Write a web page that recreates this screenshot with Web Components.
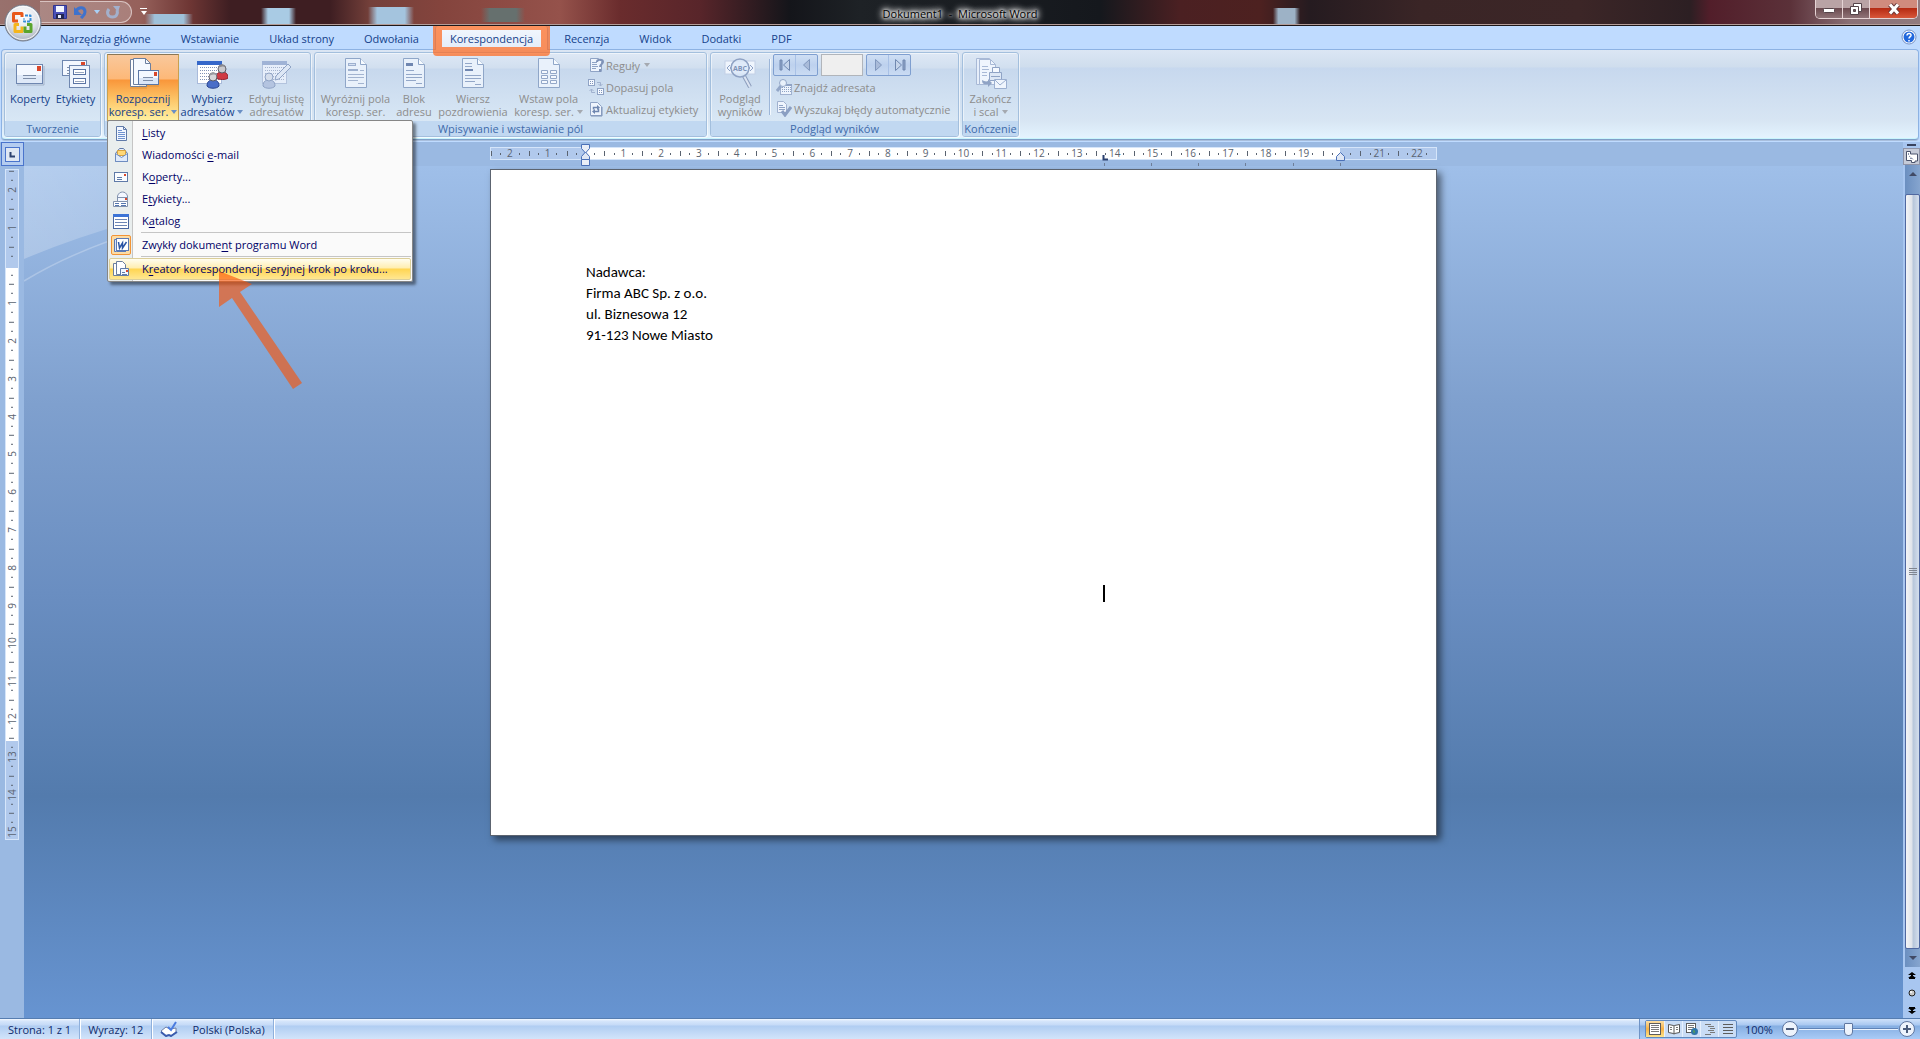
<!DOCTYPE html>
<html lang="pl">
<head>
<meta charset="utf-8">
<title>Dokument1 - Microsoft Word</title>
<style>
    html, body {
        margin: 0;
        height: 100%;
        overflow: hidden;
    }

    body {
        font-family: "Segoe UI", "Open Sans", "Noto Sans", sans-serif;
        font-size: 11px;
        line-height: 13px;
        color: #15428b;
    }
</style>
</head>
<body>

<word-app>
    <title-bar slot="title" heading="Dokument1  -  Microsoft Word"></title-bar>

    <ribbon-tabs slot="tabs">
        <ribbon-tab>Narzędzia główne</ribbon-tab>
        <ribbon-tab>Wstawianie</ribbon-tab>
        <ribbon-tab>Układ strony</ribbon-tab>
        <ribbon-tab>Odwołania</ribbon-tab>
        <ribbon-tab selected>Korespondencja</ribbon-tab>
        <ribbon-tab>Recenzja</ribbon-tab>
        <ribbon-tab>Widok</ribbon-tab>
        <ribbon-tab>Dodatki</ribbon-tab>
        <ribbon-tab>PDF</ribbon-tab>
    </ribbon-tabs>

    <ribbon-panel slot="ribbon">
        <ribbon-group label="Tworzenie">
            <big-button icon="envelope" line1="Koperty" style="--w: 46px"></big-button>
            <big-button icon="labels" line1="Etykiety" style="--w: 45px"></big-button>
        </ribbon-group>
        <ribbon-group>
            <big-button icon="merge" line1="Rozpocznij" line2="koresp. ser." arrow active style="--w: 72px">
                <drop-menu slot="menu">
                    <menu-item icon="m-letter"><u>L</u>isty</menu-item>
                    <menu-item icon="m-mail">Wiadomości <u>e</u>-mail</menu-item>
                    <menu-item icon="m-envelope">K<u>o</u>perty...</menu-item>
                    <menu-item icon="m-labels">E<u>t</u>ykiety...</menu-item>
                    <menu-item icon="m-catalog">K<u>a</u>talog</menu-item>
                    <menu-line></menu-line>
                    <menu-item icon="m-word" checked>Zwykły dokume<u>n</u>t programu Word</menu-item>
                    <menu-line></menu-line>
                    <menu-item icon="m-wizard" hot>K<u>r</u>eator korespondencji seryjnej krok po kroku...</menu-item>
                </drop-menu>
            </big-button>
            <big-button icon="people" line1="Wybierz" line2="adresatów" arrow style="--w: 66px"></big-button>
            <big-button icon="editlist" line1="Edytuj listę" line2="adresatów" disabled style="--w: 63px"></big-button>
        </ribbon-group>
        <ribbon-group label="Wpisywanie i wstawianie pól">
            <big-button icon="doc-mark" line1="Wyróżnij pola" line2="koresp. ser." disabled style="--w: 77px"></big-button>
            <big-button icon="doc-addr" line1="Blok" line2="adresu" disabled style="--w: 40px"></big-button>
            <big-button icon="doc-greet" line1="Wiersz" line2="pozdrowienia" disabled style="--w: 78px"></big-button>
            <big-button icon="doc-field" line1="Wstaw pola" line2="koresp. ser." arrow disabled style="--w: 73px"></big-button>
            <button-stack style="--w: 119px">
                <small-button icon="rules" arrow>Reguły</small-button>
                <small-button icon="match">Dopasuj pola</small-button>
                <small-button icon="refresh">Aktualizuj etykiety</small-button>
            </button-stack>
        </ribbon-group>
        <ribbon-group label="Podgląd wyników">
            <big-button icon="preview" line1="Podgląd" line2="wyników" disabled style="--w: 54px"></big-button>
            <group-divider></group-divider>
            <button-stack style="--w: 183px">
                <record-nav></record-nav>
                <small-button icon="find">Znajdź adresata</small-button>
                <small-button icon="check">Wyszukaj błędy automatycznie</small-button>
            </button-stack>
        </ribbon-group>
        <ribbon-group label="Kończenie">
            <big-button icon="finish" line1="Zakończ" line2="i scal" arrow disabled style="--w: 51px"></big-button>
        </ribbon-group>
    </ribbon-panel>

    <word-workspace slot="work">
        <doc-page>
            <p>Nadawca:</p>
            <p>Firma ABC Sp. z o.o.</p>
            <p>ul. Biznesowa 12</p>
            <p>91-123 Nowe Miasto</p>
        </doc-page>
    </word-workspace>

    <status-bar slot="status"></status-bar>
</word-app>

<script>
// Shared drawings, keyed by icon name: [width, height, markup]
const page = (inner) => `
    <path d="M5.5 1.500h15l6 6v23h-21z" fill="#e9f1fb" stroke="#8fa6c8"/>
    <path d="M20.500 1.500v6h6" fill="#f7fbff" stroke="#8fa6c8"/>${inner}`;

const ICONS = {
    envelope: [32, 32, `
        <path d="M3 28h27V9" fill="none" stroke="#8e9bb0" opacity=".6"/>
        <rect x="2.500" y="7.500" width="26" height="19" fill="#f4f8ff" stroke="#6f87b0"/>
        <rect x="3" y="18" width="25" height="8" fill="#dfe9f8"/>
        <rect x="23" y="9" width="4" height="5" fill="#d9472b"/>
        <path d="M9 18.500h13M9 21.500h13" stroke="#7f8ea8"/>`],
    labels: [32, 32, `
        <rect x="2.500" y="3.500" width="24" height="15" fill="#f4f8ff" stroke="#6f87b0"/>
        <rect x="21" y="5" width="4" height="4" fill="#d9472b"/>
        <path d="M7 10.500h5M7 13.500h5M7 16.500h5" stroke="#7f8ea8"/>
        <rect x="9.500" y="8.500" width="20" height="22" fill="#eef4fd" stroke="#6f87b0"/>
        <rect x="13.500" y="12.500" width="12" height="5" fill="#fff" stroke="#5a74a4"/>
        <rect x="13.500" y="21.500" width="12" height="5" fill="#fff" stroke="#5a74a4"/>
        <path d="M15 15.500h9M15 24.500h9" stroke="#9aa8c0"/>`],
    merge: [32, 32, `
        <path d="M3.500 2.500h12l4 4v23h-16z" fill="#fff" stroke="#6c7f9f"/>
        <path d="M6.500 1.500h12l5 5v21h-17z" fill="#f5f9ff" stroke="#6c7f9f"/>
        <path d="M18.500 1.500v5h5" fill="none" stroke="#6c7f9f"/>
        <rect x="11.500" y="13.500" width="20" height="14" fill="#f4f8ff" stroke="#5c77a5"/>
        <rect x="12" y="21" width="19" height="6" fill="#dbe6f7"/>
        <rect x="27" y="15" width="3" height="4" fill="#d9472b"/>
        <path d="M16 20.500h10M16 23.500h10" stroke="#7f8ea8"/>
        <path d="M3 31h17M12 29h20" stroke="#a07030" opacity=".35"/>`],
    people: [32, 32, `
        <rect x="1.500" y="4.500" width="24" height="22" fill="#fff" stroke="#a9bada"/>
        <rect x="1" y="4" width="25" height="4" fill="#3567c9"/>
        <path d="M4 10.500h20M4 13.500h20M4 16.500h20M4 19.500h20M4 22.500h20" stroke="#8193b5" stroke-dasharray="1 1"/>
        <path d="M20 21c0-5 3-6 6-6s6 1 6 6c-2 2-9 2-12 0z" fill="#cf3a44" stroke="#912530"/>
        <circle cx="26" cy="12" r="4" fill="#c9c9cd" stroke="#5a5a66"/><path d="M22 11c0-5 8-5 8 0-2-2-5-2-8 0z" fill="#8a8a90"/>
        <path d="M11 29c0-5 3-6 6-6s6 1 6 6c-2 3-10 3-12 0z" fill="#4a6ec8" stroke="#2b4690"/>
        <circle cx="17" cy="20" r="4" fill="#d6d6da" stroke="#5a5a66"/><path d="M13 19c0-5 8-5 8 0-2-2-5-2-8 0z" fill="#9a9aa0"/>`],
    editlist: [32, 32, `
        <rect x="1.500" y="4.500" width="24" height="22" fill="#e6eefa" stroke="#b3c3dd"/>
        <rect x="1" y="4" width="25" height="4" fill="#9fb3d6"/>
        <path d="M4 10.500h20M4 13.500h20M4 16.500h20M4 19.500h20M4 22.500h20" stroke="#a5b4ce" stroke-dasharray="1 1"/>
        <path d="M15 19l12-12 3 3-12 12-4 1z" fill="#dde7f5" stroke="#8fa3c5"/>
        <path d="M2 29c0-5 3-6 6-6s6 1 6 6c-2 3-10 3-12 0z" fill="#b4c4e0" stroke="#8fa3c5"/>
        <circle cx="8" cy="20" r="4" fill="#d5deec" stroke="#8fa3c5"/>`],
    "doc-mark": [32, 32, page(`
        <rect x="8.500" y="6.500" width="7" height="2" fill="#d6e1f2" stroke="#9db0cf"/>
        <path d="M8 13h10" stroke="#9db0cf" stroke-width="2"/>
        <path d="M20 13.500h4M8 17.500h16M8 20.500h16M8 23.500h10M18 26.500h6" stroke="#a3b4d0"/>`)],
    "doc-addr": [32, 32, page(`
        <rect x="8" y="6" width="7" height="3" fill="#6f86b0"/>
        <path d="M8 13.500h8M8 17.500h16M8 20.500h16M8 23.500h10M18 26.500h6" stroke="#93a7c8"/>`)],
    "doc-greet": [32, 32, page(`
        <path d="M8 13h8" stroke="#6f86b0" stroke-width="2"/>
        <path d="M8 6.500h7M8 9.500h7M8 18.500h16M8 21.500h16M8 24.500h10M18 27.500h6" stroke="#93a7c8"/>`)],
    "doc-field": [32, 32, page(`
        <path d="M8.500 13.500h6v3h-6zM17.500 13.500h6v3h-6zM8.500 18.500h6v3h-6zM17.500 18.500h6v3h-6zM8.500 23.500h6v3h-6zM17.500 23.500h6v3h-6z" fill="#f5f9ff" stroke="#93a7c8"/>`)],
    preview: [32, 32, `
        <rect x="1" y="4" width="30" height="13" fill="#eff5fd" stroke="#c3d0e6"/>
        <path d="M6 8l-3 3 3 3M9 8l-3 3 3 3M26 8l3 3-3 3M23 8l3 3-3 3" fill="none" stroke="#8ea2c6"/>
        <path d="M20 19l6 11" stroke="#8b9cbc" stroke-width="4"/><path d="M20 19l6 11" stroke="#dbe4f2" stroke-width="2"/>
        <circle cx="16" cy="11" r="9" fill="#dbe7f7" fill-opacity=".8" stroke="#8fa2c4" stroke-width="1.500"/>
        <text x="16" y="14" text-anchor="middle" font-size="7" font-weight="700" fill="#7f93b8">ABC</text>`],
    finish: [32, 32, `
        <path d="M1.500 1.500h13v26h-13z" fill="#e6eefa" stroke="#a8b9d6"/>
        <path d="M4.500 2.500h11l5 5v20h-16z" fill="#eff5fd" stroke="#a8b9d6"/>
        <path d="M15.500 2.500v5h5M7 9.500h6M7 12.500h7M7 15.500h5M7 18.500h5" fill="none" stroke="#a8b9d6"/>
        <path d="M14.500 15.500h12v8h-12z" fill="#dde7f5" stroke="#8fa3c5"/><path d="M17.500 10.500h7v5h-7z" fill="#f5f9ff" stroke="#8fa3c5"/><path d="M16 19.500h9" stroke="#8fa3c5"/>
        <path d="M19.500 22.500h12v9h-12z" fill="#eff5fd" stroke="#9bafd0"/><path d="M20 23l5 5 6-5" fill="none" stroke="#9bafd0"/>
        <path d="M7 23c0 4 2 5 6 4v3l4-4-4-4v2c-2 1-4 0-6-1z" fill="#8fa3c5"/>`],

    rules: [16, 16, `
        <path d="M2.500 1.500h8l3 3v10h-11z" fill="#eef4fd" stroke="#8fa3c5"/><path d="M4 5.500h5M4 7.500h5M4 9.500h6M4 11.500h4" stroke="#8fa3c5"/>
        <path d="M9 5c0-3 6-3 6 0 0 2-3 2-3 5M12 12v3" fill="none" stroke="#7f93b8" stroke-width="2"/>`],
    match: [16, 16, `
        <rect x=".5" y=".5" width="6" height="6" fill="#f5f9ff" stroke="#8fa3c5"/><rect x="9.500" y="9.500" width="6" height="6" fill="#f5f9ff" stroke="#8fa3c5"/>
        <path d="M2 2.500h3M2 4.500h3M11 11.500h3M11 13.500h3" stroke="#7f93b8" stroke-dasharray="1 1"/>
        <path d="M9 3.500h3.500V7M10.500 5l2 2 2-2M7 13.500H3.500V10M1.500 12l2-2 2 2" fill="none" stroke="#a0b1cf"/>`],
    refresh: [16, 16, `
        <path d="M2.500 1.500h7l4 4v9h-11z" fill="#eef4fd" stroke="#8fa3c5"/><path d="M14 6v9H3" fill="none" stroke="#7f93b8"/>
        <path d="M5.500 8.500V6.500h4M10.500 7.500v3h-4" fill="none" stroke="#6f86b0" stroke-width="1.500"/><path d="M9 4l3 2.500-3 2.500zM7 8l-3 2.500 3 2.500z" fill="#6f86b0"/>`],
    find: [16, 16, `
        <rect x="4.500" y="5.500" width="11" height="10" fill="#eef4fd" stroke="#a0b1cf"/>
        <path d="M6 8.500h9M6 10.500h9M6 12.500h9" stroke="#8fa3c5" stroke-dasharray="1 1"/><path d="M9 6h7" stroke="#8fa3c5" stroke-width="2"/>
        <path d="M5 7l-4 5" stroke="#93a7c8" stroke-width="3"/><circle cx="7" cy="4" r="3.500" fill="#e9f1fb" stroke="#93a7c8"/>`],
    check: [16, 16, `
        <path d="M1.500.5h6l3 3v8h-9z" fill="#eef4fd" stroke="#a0b1cf"/><path d="M3 4.500h4M3 6.500h6M3 8.500h6" stroke="#8fa3c5"/>
        <path d="M6 10l3 4 6-8" fill="none" stroke="#8b9fc2" stroke-width="3"/>`],

    "m-letter": [16, 16, `
        <path d="M3.500 1.500h7l3 3v11h-10z" fill="#f2f7ff" stroke="#5f7aa8"/><path d="M10.500 1.500v3h3" fill="none" stroke="#5f7aa8"/>
        <path d="M5 5.500h4M5 7.500h7M5 9.500h7M5 11.500h7M5 13.500h7" stroke="#6f93cf"/>`],
    "m-mail": [16, 16, `
        <path d="M2.500 6.500l4-5h4l4 5v8h-12z" fill="#e8f0fc" stroke="#5f7aa8"/><path d="M4.500 3.500h8v5h-8z" fill="#ffd878" stroke="#d9a441"/>
        <path d="M2.500 6.500l6 4 6-4v8h-12z" fill="#dfeafb" stroke="#6d8cc0"/>`],
    "m-envelope": [16, 16, `
        <rect x="1.500" y="3.500" width="13" height="9" fill="#fbfdff" stroke="#5f7aa8"/><rect x="11" y="5" width="2" height="2" fill="#d9472b"/>
        <path d="M4 8.500h5M4 10.500h5" stroke="#5f7aa8"/>`],
    "m-labels": [16, 16, `
        <path d="M4.500 5c1-3 3-4 5-4s4 1 5 4v8h-10z" fill="#f2f7ff" stroke="#8393ae"/><path d="M5 6.500h9" stroke="#8393ae"/><rect x="12" y="7" width="2" height="2" fill="#d9472b"/>
        <path d="M.5 10.500h14v5H.5z" fill="#fff" stroke="#8393ae"/><path d="M2 12.500h4M2 14.500h4M8 12.500h5M8 14.500h5" stroke="#5577b0"/>`],
    "m-catalog": [16, 16, `
        <rect x=".5" y="1.500" width="15" height="14" fill="#fff" stroke="#4a67a0"/><rect y="1" width="16" height="3" fill="#3d74d6"/>
        <path d="M2 6.500h12M2 9.500h12M2 12.500h12" stroke="#6d86b5"/>`],
    "m-word": [16, 16, `
        <rect x="3.500" y="1.500" width="12" height="12" fill="#fff" stroke="#5b7ab4"/><path d="M1.500 2.500h2v12h-2zM4 14.500h9" fill="#dbe6f8" stroke="#5b7ab4"/>
        <path d="M5.500 5l1 6 3-5v5l4-6" fill="none" stroke="#2b55a5" stroke-width="1.500"/>`],
    "m-wizard": [16, 16, `
        <path d="M.5 2.500h8v12h-8z" fill="#fff" stroke="#6c7f9f"/><path d="M3.500.5h6l3 3v10h-9z" fill="#fff" stroke="#6c7f9f"/>
        <path d="M7.500 7.500h8v7h-8z" fill="#f2f7ff" stroke="#5f7aa8"/><rect x="13" y="9" width="2" height="2" fill="#d9472b"/><path d="M9 11.500h3M9 13.500h5" stroke="#5f7aa8"/>`],

    save: [16, 16, `
        <path d="M1.500 1.500h13v13h-13z" fill="#4a50b8" stroke="#2f3590"/><rect x="4" y="2" width="8" height="6" fill="#f2f6ff"/>
        <rect x="4" y="10" width="8" height="5" fill="#23264f"/><rect x="6" y="11" width="3" height="3" fill="#e8ecff"/>`],
    undo: [16, 16, `<path d="M3 7c3-5 9-4 9 1 0 3-2 4-4 6" fill="none" stroke="#3f72cc" stroke-width="3"/><path d="M1 3v8h8z" fill="#3f72cc"/>`],
    redo: [16, 16, `<path d="M4 5c-3 4-1 8 3.500 8S13 9 12 6" fill="none" stroke="#a3b0cc" stroke-width="3"/><path d="M8 2h7l-2 6z" fill="#a3b0cc"/>`],
    logo: [38, 38, `
        <defs><radialGradient id="g" cx=".5" cy=".3" r=".7"><stop offset="0" stop-color="#fff"/><stop offset=".6" stop-color="#dfe3ea"/><stop offset="1" stop-color="#a9b0bd"/></radialGradient></defs>
        <circle cx="19" cy="19" r="18" fill="url(#g)" stroke="#737a88"/><circle cx="19" cy="19" r="16.500" fill="none" stroke="#fff" opacity=".8"/>
        <g fill="none" stroke-linejoin="round">
            <path d="M14 17H9.500V9.500H18V13" stroke="#e8591c" stroke-width="3"/><path d="M21 11.500h5.500v6H20v-3" stroke="#3a8fd8" stroke-width="2" stroke-dasharray="3 1"/>
            <path d="M15 20.500h-4v7h7v-5" stroke="#f5b51d" stroke-width="3"/><path d="M23 20.500h4v7h-6v-5" stroke="#5aa52c" stroke-width="3"/>
        </g>`],
    help: [16, 16, `
        <circle cx="8" cy="8" r="7" fill="#fff" stroke="#7591c4"/><circle cx="8" cy="8" r="5.500" fill="#2268dd"/>
        <path d="M6 6.500c0-3 4.500-2.500 4 0-.3 1-2 1.500-2 3M8 11v1.500" fill="none" stroke="#fff" stroke-width="1.500"/>`],
    proof: [18, 16, `
        <path d="M1 10l5-4 4 2 6-1v4l-5 4-3-1-2 1z" fill="#fff" stroke="#6d7da4"/><path d="M1 11l5 4 3-1 2 1 6-4" fill="none" stroke="#3a5cae" stroke-width="2"/>
        <path d="M8 6l3 3 5-8" fill="none" stroke="#4a7be0" stroke-width="2"/>`],

    "v-print": [12, 12, `<rect x=".5" y=".5" width="11" height="11" fill="#fff" stroke="#5c5c5c"/><path d="M2 2.500h8M2 4.500h8M2 6.500h8M2 8.500h8" stroke="#7a7a7a"/>`],
    "v-read": [12, 12, `<path d="M.5 1.500l5 1 1 0 5-1v8l-5 1h-1l-5-1zM6 2.500v9" fill="#fff" stroke="#555"/><path d="M2 4.500h2M2 6.500h2M8 4.500h2M8 6.500h2" stroke="#777"/>`],
    "v-web": [12, 12, `<rect x=".5" y=".5" width="9" height="9" fill="#fff" stroke="#5c5c5c"/><path d="M2 2.500h6M2 4.500h6M2 6.500h4" stroke="#777"/><circle cx="8.500" cy="8.500" r="3.500" fill="#2f74a8"/><path d="M7 7l2 1-1 3z" fill="#58a845"/>`],
    "v-outline": [12, 12, `<path d="M1 1.500h6M4 3.500h6M6 5.500h5M4 7.500h6M6 9.500h5M1 11.500h6" stroke="#7a7a7a"/>`],
    "v-draft": [12, 12, `<path d="M1 1.500h10M1 4.500h10M1 7.500h10M1 10.500h10" stroke="#5c5c5c"/>`],
    minus: [18, 18, `<circle cx="9" cy="9" r="7.500" fill="#edf3fc" stroke="#5f76a0"/><path d="M5 9h8" stroke="#4b5c7c" stroke-width="2"/>`],
    plus: [18, 18, `<circle cx="9" cy="9" r="7.500" fill="#edf3fc" stroke="#5f76a0"/><path d="M5 9h8M9 5v8" stroke="#4b5c7c" stroke-width="2"/>`],

    "nav-first": [12, 12, `<path d="M1 1h2v10H1z" fill="#8ea3c6" stroke="#7088b0"/><path d="M10.500.5v11L4.500 6z" fill="#c5d4ea" stroke="#7088b0"/>`],
    "nav-prev": [12, 12, `<path d="M8.500.5v11L2.500 6z" fill="#a9bbd9" stroke="#8097bd"/>`],
    "nav-next": [12, 12, `<path d="M3.500.5v11L9.500 6z" fill="#a9bbd9" stroke="#8097bd"/>`],
    "nav-last": [12, 12, `<path d="M9 1h2v10H9z" fill="#8ea3c6" stroke="#7088b0"/><path d="M1.500.5v11L7.500 6z" fill="#c5d4ea" stroke="#7088b0"/>`],

    "tab-stop": [7, 7, `<path d="M1.500 1v4.500H6" fill="none" stroke="#2c4270" stroke-width="2"/>`],
    "win-min": [12, 12, `<rect x=".5" y="5.500" width="11" height="4" rx="1" fill="#fff" stroke="#55454a"/>`],
    "win-max": [12, 12, `<path d="M3.500.5h8v8h-8z" fill="#fff" stroke="#55454a"/><path d="M.5 3.500h8v8h-8z" fill="#fff" stroke="#55454a"/><path d="M3.500 6.500h2v2h-2z" fill="#6d5559" stroke="#55454a"/>`],
    "win-close": [12, 12, `<path d="M2 1.500l8 9M10 1.500l-8 9" stroke="#6b3b3b" stroke-width="5"/><path d="M2 1.500l8 9M10 1.500l-8 9" stroke="#fff" stroke-width="3"/>`],
    "ruler-toggle": [14, 14, `<path d="M1.500 1.500h4V4h7v7H10v1.500H6.500V10.500H1.500z" fill="#fff" stroke="#4a536c"/><path d="M4 6l5 4M3.500 3v3M5 8.500h3" stroke="#8a93ac" stroke-dasharray="2 1"/>`],
    "indent": [11, 22, `
        <path d="M1.500.5h8v4L5.500 9l-4-4.500z" fill="#e9eef7" stroke="#4a70b8"/><path d="M1.500 15.500v-3L5.500 8l4 4.500v3z" fill="#dfe7f4" stroke="#4a70b8"/>
        <path d="M1.500 15.500h8v6h-8z" fill="#e9eef7" stroke="#4a70b8"/>`],
    "indent-right": [11, 9, `<path d="M1.500 8.500v-4l4-4 4 4v4z" fill="#dfe7f4" stroke="#4a70b8"/>`],
    "page-up": [8, 8, `<path d="M4 0L0 3h3v1h2V3h3zM4 3L0 6h8zM1 6h6v1H1z"/>`],
    "page-down": [8, 8, `<path d="M4 8L0 5h3V4h2v1h3zM4 5L0 2h8zM1 1h6v1H1z"/>`],
    "browse": [8, 8, `<circle cx="4" cy="4" r="3" fill="#c9c9c9" stroke="#222"/><circle cx="3" cy="3" r="1" fill="#fff"/>`],
    "arrow-up": [8, 4, `<path d="M4 0l4 4H0z" fill="#414a66"/>`],
    "arrow-down": [8, 4, `<path d="M0 0h8L4 4z" fill="#414a66"/>`]
};

class BaseElement extends HTMLElement {
    constructor() {
        super();
        this.attachShadow({ mode: 'open' });
    }

    connectedCallback() {
        this.shadowRoot.innerHTML = this.render();
    }
}

class AppIcon extends BaseElement {
    render() {
        const [w, h, markup] = ICONS[this.getAttribute('name')];
        return `
            <style>
                :host { display: inline-block; flex: none; line-height: 0; }
                svg { display: block; }
            </style>
            <svg width="${w}" height="${h}" viewBox="0 0 ${w} ${h}" aria-hidden="true">${markup}</svg>
        `;
    }
}

class WordApp extends BaseElement {
    render() {
        return `
            <style>
                :host {
                    display: grid;
                    grid-template-rows: auto auto auto minmax(0, 1fr) auto;
                    height: 100vh;
                    background: #bfdbff;
                    cursor: default;
                }
            </style>
            <slot name="title"></slot>
            <slot name="tabs"></slot>
            <slot name="ribbon"></slot>
            <slot name="work"></slot>
            <slot name="status"></slot>
        `;
    }
}

class TitleBar extends BaseElement {
    render() {
        // desktop icons showing through the glass frame
        const blur = (color, x, y, w, h) =>
            `linear-gradient(90deg, transparent, ${color} 20%, ${color} 80%, transparent) ${x}px ${y}px / ${w}px ${h}px no-repeat`;
        return `
            <style>
                :host {
                    display: grid;
                    grid-template-columns: 1fr auto 1fr;
                    position: relative;
                    z-index: 3;
                    height: 26px;
                    box-sizing: border-box;
                    border-bottom: 1px solid #1d1719;
                    box-shadow: inset 0 -1px #b39c98;
                    background:
                        ${blur('#9fc1da', 145, 14, 48, 11)},
                        ${blur('#a9cbe4', 261, 8, 35, 17)},
                        ${blur('#a4c4de', 368, 7, 46, 18)},
                        ${blur('#66706e', 481, 8, 44, 14)},
                        ${blur('#9db2c6', 1273, 8, 27, 17)},
                        linear-gradient(90deg, #98716d 0, #96615b 140px, #6e3634 190px, #3e1e22 230px, #3e1e22 330px, #74403a 370px,
                            #84443d 440px, #95524b 560px, #6a2c2d 620px, #58252a 700px, #14151a 790px, #1e2226 860px, #15181d 1100px,
                            #4b2022 1180px, #4d2120 1260px, #251b20 1310px, #3a2526 1420px, #3c2627 1580px, #2c1f23 1690px,
                            #521e2a 1710px, #5b3139 1790px, #8a7076 1850px, #907a7e 1920px);
                    color: #000;
                }
                .quick {
                    display: flex;
                    align-items: center;
                    align-self: start;
                    gap: 5px;
                    width: 92px;
                    height: 22px;
                    margin: 1px 0 0 40px;
                    padding-left: 12px;
                    box-sizing: border-box;
                    border: 1px solid #d8c2c0;
                    border-left: 0;
                    border-radius: 0 11px 11px 0;
                    background: #ffffff30;
                }
                .left { display: flex; align-items: center; gap: 8px; }
                .orb { position: absolute; left: 4px; top: 4px; }
                button { padding: 0; border: 0; background: none; font: inherit; display: flex; }
                .more { width: 7px; height: 9px; flex-direction: column; gap: 2px; align-items: center; }
                .more::before { content: ""; width: 7px; height: 1px; background: #fff; }
                .more::after, .tri { content: ""; border: 3px solid transparent; border-top: 4px solid #fff; border-bottom: 0; }
                .tri { border-top-color: #a9d0f5; }
                h1 {
                    margin: 2px 0 0;
                    align-self: center;
                    font-size: 11px;
                    font-weight: 400;
                    white-space: pre;
                    text-shadow: 0 0 3px #fff, 0 0 5px #fff, 0 0 6px #fff, 0 0 8px #fff, 0 0 10px #fff;
                }
                .window {
                    display: flex;
                    justify-self: end;
                    height: 18px;
                    margin-right: 2px;
                    border: 1px solid #e5d3d4;
                    border-top: 0;
                    border-radius: 0 0 5px 5px;
                    overflow: hidden;
                }
                .window button {
                    width: 27px;
                    align-items: center;
                    justify-content: center;
                    background: linear-gradient(#b9a3a5 45%, #6b4a4f 46%, #8f7377);
                    border-right: 1px solid #e5d3d4;
                }
                .window .close { width: 47px; border: 0; background: linear-gradient(#d08b7d 45%, #b52a12 46%, #d8573a); }
            </style>
            <div class="left">
                <button class="orb" aria-label="Przycisk pakietu Office"><app-icon name="logo"></app-icon></button>
                <div class="quick">
                    <button aria-label="Zapisz"><app-icon name="save"></app-icon></button>
                    <button aria-label="Cofnij"><app-icon name="undo"></app-icon></button>
                    <button class="tri" aria-label="Lista cofania"></button>
                    <button aria-label="Wykonaj ponownie"><app-icon name="redo"></app-icon></button>
                </div>
                <button class="more" aria-label="Dostosuj pasek"></button>
            </div>
            <h1>${this.getAttribute('heading')}</h1>
            <div class="window">
                <button aria-label="Minimalizuj"><app-icon name="win-min"></app-icon></button>
                <button aria-label="Przywróć"><app-icon name="win-max"></app-icon></button>
                <button class="close" aria-label="Zamknij"><app-icon name="win-close"></app-icon></button>
            </div>
        `;
    }
}

class RibbonTabs extends BaseElement {
    render() {
        return `
            <style>
                :host {
                    display: flex;
                    gap: 2px;
                    position: relative;
                    z-index: 2;
                    height: 23px;
                    padding-left: 46px;
                    background: #bfdbff;
                }
                button { display: flex; margin: 3px 3px 0 auto; padding: 0; border: 0; background: none; align-self: start; }
            </style>
            <slot></slot>
            <button aria-label="Pomoc"><app-icon name="help"></app-icon></button>
        `;
    }
}

class RibbonTab extends BaseElement {
    render() {
        return `
            <style>
                :host { display: block; position: relative; }
                button {
                    height: 24px;
                    padding: 1px 14px 0;
                    border: 0;
                    background: none;
                    font: inherit;
                    color: inherit;
                    white-space: nowrap;
                }
                :host([selected]) button {
                    border: 1px solid #8db2e3;
                    border-width: 0 1px;
                    border-radius: 3px 3px 0 0;
                    background: linear-gradient(#f3f8fe, #e3ecf8);
                }
                .mark {
                    position: absolute;
                    inset: -5px -2px -7px;
                    border: 9px solid #ff6a1fb8;
                    border-radius: 4px;
                    pointer-events: none;
                }
            </style>
            <button role="tab"><slot></slot></button>
            ${this.hasAttribute('selected') ? '<div class="mark"></div>' : ''}
        `;
    }
}

class RibbonPanel extends BaseElement {
    render() {
        return `
            <style>
                :host {
                    display: flex;
                    gap: 3px;
                    position: relative;
                    z-index: 1;
                    height: 91px;
                    margin: 0 1px 2px;
                    padding: 2px;
                    box-sizing: border-box;
                    border: 1px solid #8db2e3;
                    border-bottom-color: #7f9fc8;
                    border-radius: 4px;
                    box-shadow: inset 0 -1px #c8f5fd, 0 1px #a9bfdd;
                    background: linear-gradient(#dbe6f4, #cfdded 17px, #c7d8ee 18px, #d7e5f3 70px, #e4f4ff);
                }
            </style>
            <slot></slot>
        `;
    }
}

class RibbonGroup extends BaseElement {
    render() {
        return `
            <style>
                :host {
                    display: flex;
                    flex-direction: column;
                    height: 85px;
                    box-sizing: border-box;
                    border: 1px solid #a3bfdd;
                    border-radius: 3px;
                    box-shadow: 1px 1px #ffffffa0, inset 1px 1px #ffffff80;
                    background: linear-gradient(#dee8f5, #d1dfef 15px, #c7d8ed 16px, #d8e7f5 68px);
                }
                .body { display: flex; flex: 1; padding: 1px 2px 0; }
                .label {
                    height: 15px;
                    border-radius: 0 0 2px 2px;
                    background: #c1d8f1;
                    line-height: 15px;
                    text-align: center;
                    color: #3e6aaa;
                    white-space: nowrap;
                }
            </style>
            <div class="body"><slot></slot></div>
            <div class="label">${this.getAttribute('label') || ''}</div>
        `;
    }
}

class BigButton extends BaseElement {
    render() {
        const line2 = this.getAttribute('line2') || '';
        return `
            <style>
                :host { display: block; position: relative; width: var(--w); height: 67px; }
                button {
                    display: flex;
                    flex-direction: column;
                    align-items: center;
                    gap: 3px;
                    width: 100%;
                    height: 100%;
                    padding: 3px 0 0;
                    border: 0;
                    background: none;
                    font: inherit;
                    color: inherit;
                    white-space: nowrap;
                }
                button:disabled { color: #8d8d8d; }
                :host([active]) button {
                    padding-top: 2px;
                    border: 1px solid #c8a050;
                    border-top-color: #8b7654;
                    background: linear-gradient(#f9c89c, #fdb878 24px, #f9963a 25px, #fdc466 44px, #fff0a0);
                }
                i {
                    display: inline-block;
                    margin: 0 0 2px 3px;
                    border: 3px solid transparent;
                    border-top: 4px solid #6a8fc5;
                    border-bottom: 0;
                    vertical-align: middle;
                }
                :disabled i { border-top-color: #a5a9b0; }
                ::slotted([slot="menu"]) { position: absolute; left: 0; top: 66px; }
            </style>
            <button ${this.hasAttribute('disabled') ? 'disabled' : ''}>
                <app-icon name="${this.getAttribute('icon')}"></app-icon>
                <span>${this.getAttribute('line1')}${line2 ? '<br>' + line2 : ''}${this.hasAttribute('arrow') ? '<i></i>' : ''}</span>
            </button>
            <slot name="menu"></slot>
        `;
    }
}

class ButtonStack extends BaseElement {
    render() {
        return `
            <style>
                :host { display: flex; flex-direction: column; width: var(--w); }
            </style>
            <slot></slot>
        `;
    }
}

class SmallButton extends BaseElement {
    render() {
        return `
            <style>
                :host { display: block; }
                button {
                    display: flex;
                    align-items: center;
                    gap: 2px;
                    height: 22px;
                    padding: 0 0 0 3px;
                    border: 0;
                    background: none;
                    font: inherit;
                    color: #8d8d8d;
                    white-space: nowrap;
                }
                i { margin-left: 2px; border: 3px solid transparent; border-top: 4px solid #a5a9b0; border-bottom: 0; }
            </style>
            <button disabled>
                <app-icon name="${this.getAttribute('icon')}"></app-icon>
                <slot></slot>
                ${this.hasAttribute('arrow') ? '<i></i>' : ''}
            </button>
        `;
    }
}

class GroupDivider extends BaseElement {
    render() {
        return `
            <style>
                :host { display: block; width: 1px; height: 56px; margin: 5px 3px 0 2px; background: #9db6d8; box-shadow: 1px 0 #f4f9ff; }
            </style>
        `;
    }
}

class RecordNav extends BaseElement {
    render() {
        return `
            <style>
                :host { display: flex; gap: 3px; height: 22px; }
                .pair {
                    display: flex;
                    width: 45px;
                    box-sizing: border-box;
                    border: 1px solid #7f9fd0;
                    border-radius: 2px;
                    background: linear-gradient(#cfdff4, #bdd1ee 50%, #cadbf3);
                }
                button {
                    display: flex;
                    flex: 1;
                    align-items: center;
                    justify-content: center;
                    padding: 0;
                    border: 0;
                    background: none;
                }
                button + button { border-left: 1px solid #a9c1e6; }
                input {
                    width: 42px;
                    padding: 0;
                    box-sizing: border-box;
                    border: 1px solid #b1b5bb;
                    background: #efefef;
                }
            </style>
            <div class="pair">
                <button disabled aria-label="Pierwszy rekord"><app-icon name="nav-first"></app-icon></button>
                <button disabled aria-label="Poprzedni rekord"><app-icon name="nav-prev"></app-icon></button>
            </div>
            <input type="text" disabled aria-label="Rekord">
            <div class="pair">
                <button disabled aria-label="Następny rekord"><app-icon name="nav-next"></app-icon></button>
                <button disabled aria-label="Ostatni rekord"><app-icon name="nav-last"></app-icon></button>
            </div>
        `;
    }
}

class DropMenu extends BaseElement {
    render() {
        return `
            <style>
                :host {
                    display: block;
                    width: 306px;
                    padding: 1px;
                    box-sizing: border-box;
                    border: 1px solid #868686;
                    border-radius: 2px;
                    background: linear-gradient(90deg, #e9eeee 24px, #c5c5c5 24px, #c5c5c5 25px, #fafafa 25px);
                    box-shadow: 3px 3px 3px #00000070;
                    color: #000066;
                }
                svg { position: absolute; left: 111px; top: 150px; pointer-events: none; }
            </style>
            <div role="menu"><slot></slot></div>
            <svg width="84" height="118" viewBox="0 0 84 118" aria-hidden="true">
                <path d="M0 0l33 13-12 8 62 91-9 6-61-91-13 9z" fill="#fb5303" fill-opacity=".62"/>
            </svg>
        `;
    }
}

class MenuItem extends BaseElement {
    render() {
        return `
            <style>
                :host { display: block; }
                button {
                    display: flex;
                    align-items: center;
                    gap: 11px;
                    width: 100%;
                    height: 22px;
                    padding: 0 0 0 1px;
                    box-sizing: border-box;
                    border: 1px solid transparent;
                    background: none;
                    font: inherit;
                    color: inherit;
                    white-space: nowrap;
                }
                .icon { display: grid; place-items: center; width: 20px; height: 20px; box-sizing: border-box; }
                .text { padding-bottom: 2px; }
                :host([checked]) .icon { border: 1px solid #f29436; border-radius: 2px; background: #fcdca4; }
                :host([hot]) button {
                    border-color: #dbce99;
                    border-radius: 2px;
                    background: linear-gradient(#fffdf0, #ffeeb0 45%, #ffd552 50%, #ffe792);
                }
                ::slotted(u) { text-underline-offset: 2px; }
            </style>
            <button role="menuitem">
                <span class="icon"><app-icon name="${this.getAttribute('icon')}"></app-icon></span>
                <span class="text"><slot></slot></span>
            </button>
        `;
    }
}

class MenuLine extends BaseElement {
    render() {
        return `
            <style>
                :host { display: block; height: 1px; margin: 0 0 1px 32px; background: #c5c5c5; }
            </style>
        `;
    }
}

// Centimetre ruler; one cell per centimetre, centred on its number
class RulerBar extends BaseElement {
    render() {
        const from = Number(this.getAttribute('from'));
        const to = Number(this.getAttribute('to'));
        const skip = (this.getAttribute('skip') || '').split(' ').map(Number);
        let cells = '';
        for (let n = from; n <= to; n++) {
            cells += `<span>${skip.includes(n) ? '' : Math.abs(n)}</span>`;
        }
        const tick = 'linear-gradient(#5a6370, #5a6370)';
        return `
            <style>
                :host { display: block; box-sizing: border-box; border: 1px solid #d5e5fa; overflow: hidden; color: #5a6370; font-size: 10px; line-height: 11px; }
                :host(:not([vertical])) { height: 13px; background: linear-gradient(90deg, #b1c9ec 95px, #fff 95px, #fff 849px, #b1c9ec 849px); }
                :host([vertical]) { width: 14px; background: linear-gradient(#b1c9ec 98px, #fff 98px, #fff 571px, #b1c9ec 571px); }
                div { display: flex; height: 11px; }
                span {
                    flex: 1 1 0;
                    text-align: center;
                    background: ${tick} 0 3px / 1px 5px, ${tick} 25% 5px / 1px 2px, ${tick} 75% 5px / 1px 2px;
                    background-repeat: no-repeat;
                }
                :host([vertical]) div { flex-direction: column; width: 12px; height: 680px; padding-top: 1px; }
                :host([vertical]) span {
                    writing-mode: vertical-rl;
                    transform: rotate(180deg);
                    line-height: 12px;
                    background: ${tick} 4px 100% / 5px 1px, ${tick} 5px 25% / 2px 1px, ${tick} 5px 75% / 2px 1px;
                    background-repeat: no-repeat;
                }
            </style>
            <div>${cells}</div>
        `;
    }
}

class WordWorkspace extends BaseElement {
    render() {
        const stops = [614, 661, 708, 755, 803, 850].map((x) => `<b style="left: ${x}px"></b>`).join('');
        return `
            <style>
                :host {
                    display: grid;
                    grid-template-columns: 24px minmax(0, 1fr) 17px;
                    min-height: 0;
                }
                .side { display: flex; flex-direction: column; background: #9ab9e2; overflow: hidden; }
                .corner {
                    flex: none;
                    display: grid;
                    place-items: center;
                    height: 24px;
                    padding: 0;
                    border: 1px solid #4a74cc;
                    background: #b4ccf0;
                    margin-left: 1px;
                }
                .corner span { display: grid; place-items: center; width: 13px; height: 13px; border: 1px solid #4a74cc; background: #dfe7f3; }
                .side ruler-bar { margin: 3px 5px 0; max-height: 671px; }
                .main { display: flex; flex-direction: column; min-height: 0; }
                .top { flex: none; height: 24px; background: #9ab9e2; }
                .top > div { position: relative; max-width: 947px; margin: 0 auto; padding-top: 5px; }
                .top app-icon, b { position: absolute; }
                .top b { top: 21px; width: 1px; height: 3px; background: #6f7f99; }
                .canvas {
                    flex: 1;
                    position: relative;
                    min-height: 0;
                    padding-top: 3px;
                    background: linear-gradient(#9fbfe9, #7fa0ce 28%, #6a8ec1 50%, #537bad 74%, #6794d1);
                }
                .wave { position: absolute; left: 0; top: 0; }
                .caret { position: absolute; left: 1079px; top: 419px; width: 2px; height: 17px; background: #000; }
            </style>
            <div class="side">
                <button class="corner" aria-label="Tabulator"><span><app-icon name="tab-stop"></app-icon></span></button>
                <ruler-bar vertical from="-2" to="15" skip="0"></ruler-bar>
            </div>
            <div class="main">
                <div class="top">
                    <div>
                        <ruler-bar from="-2" to="22" skip="0 20"></ruler-bar>
                        ${stops}
                        <app-icon name="indent" style="left: 90px; top: 2px"></app-icon>
                        <app-icon name="indent-right" style="left: 845px; top: 10px"></app-icon>
                        <app-icon name="tab-stop" style="left: 612px; top: 12px"></app-icon>
                    </div>
                </div>
                <div class="canvas">
                    <svg class="wave" width="420" height="120" aria-hidden="true">
                        <defs><linearGradient id="w" x1="0" x2="1"><stop offset="0" stop-color="#fff" stop-opacity=".24"/><stop offset="1" stop-color="#fff" stop-opacity="0"/></linearGradient></defs>
                        <path d="M0 0h400Q150 30 0 93z" fill="url(#w)"/>
                        <path d="M0 115Q90 60 260 30" fill="none" stroke="#fff" stroke-opacity=".25" stroke-width="1.500"/>
                    </svg>
                    <slot></slot>
                    <div class="caret"></div>
                </div>
            </div>
            <scroll-bar></scroll-bar>
        `;
    }
}

class DocPage extends BaseElement {
    render() {
        return `
            <style>
                :host {
                    display: block;
                    position: relative;
                    max-width: 947px;
                    min-height: 667px;
                    margin: 0 auto;
                    padding: 92px 95px;
                    box-sizing: border-box;
                    border: 1px solid #5c6470;
                    background: #fff;
                    box-shadow: 4px 4px 7px #00000080;
                    font-family: Calibri, Carlito, Lato, sans-serif;
                    font-size: 15px;
                    line-height: 21px;
                    color: #000;
                }
                ::slotted(p) { margin: 0; }
            </style>
            <slot></slot>
        `;
    }
}

class ScrollBar extends BaseElement {
    render() {
        return `
            <style>
                :host { display: flex; flex-direction: column; background: #a8c6f0; }
                button { display: grid; place-items: center; flex: none; padding: 0; border: 0; background: none; }
                .split { height: 2px; margin: 2px 4px; background: #39435f; }
                .toggle { height: 17px; border: 1px solid #9094a8; background: #c6cbd8; }
                .track { display: flex; flex-direction: column; flex: 1; margin-left: 2px; background: linear-gradient(90deg, #6b8fc0, #86a5cf); }
                .up { height: 18px; margin-bottom: 11px; }
                .thumb {
                    display: grid;
                    place-items: center;
                    flex: 1;
                    box-sizing: border-box;
                    border: 1px solid #5068a0;
                    border-radius: 2px;
                    background: linear-gradient(90deg, #f4f5f7, #dfe3ea 45%, #b7c6da 55%, #d5dfee);
                }
                .grip { width: 8px; height: 7px; background: repeating-linear-gradient(#808691 0 1px, transparent 1px 2px); }
                .down { height: 18px; }
                .jump { height: 17px; }
            </style>
            <div class="split"></div>
            <button class="toggle" aria-label="Linijka"><app-icon name="ruler-toggle"></app-icon></button>
            <div class="track">
                <button class="up" aria-label="W górę"><app-icon name="arrow-up"></app-icon></button>
                <div class="thumb"><div class="grip"></div></div>
                <button class="down" aria-label="W dół"><app-icon name="arrow-down"></app-icon></button>
            </div>
            <button class="jump" aria-label="Poprzednia strona"><app-icon name="page-up"></app-icon></button>
            <button class="jump" aria-label="Wybierz obiekt"><app-icon name="browse"></app-icon></button>
            <button class="jump" aria-label="Następna strona"><app-icon name="page-down"></app-icon></button>
        `;
    }
}

class StatusBar extends BaseElement {
    render() {
        const views = ['print', 'read', 'web', 'outline', 'draft']
            .map((v) => `<button aria-label="Widok: ${v}"><app-icon name="v-${v}"></app-icon></button>`).join('');
        return `
            <style>
                :host {
                    display: flex;
                    height: 21px;
                    box-sizing: border-box;
                    border-top: 1px solid #567db0;
                    background: linear-gradient(#f4f9ff, #d6e6fb 2px, #c5daf7 6px, #b0cdf2 7px, #d2e4fa);
                }
                button { padding: 0; border: 0; background: none; font: inherit; color: #0f2b6b; display: flex; align-items: center; }
                .info button { padding: 0 8px; border-right: 1px solid #8fb0dc; box-shadow: 1px 0 #fff; white-space: nowrap; gap: 14px; }
                .info { display: flex; flex: 1; }
                .tools {
                    display: flex;
                    align-items: center;
                    width: 281px;
                    box-sizing: border-box;
                    padding-left: 5px;
                    border-left: 1px solid #6f93c6;
                    background: linear-gradient(#cfe1fa, #a9c8f1 6px, #85aee2 7px, #a9cbf6);
                    color: #0f2b6b;
                }
                .views { display: flex; height: 18px; box-sizing: border-box; border: 1px solid #6089c0; border-radius: 2px; background: #c9dcf5; }
                .views button { width: 18px; justify-content: center; }
                .views button + button { border-left: 1px solid #e6f0fd; }
                .views button:first-child { background: linear-gradient(#fbdfa5, #f6b145 50%, #fce58e); }
                .zoom { margin: 0 8px; }
                input {
                    appearance: none;
                    flex: 1;
                    min-width: 0;
                    height: 18px;
                    margin: 0;
                    background: linear-gradient(#5f83b8, #5f83b8) 0 8px / 100% 1px no-repeat, linear-gradient(#eaf3ff, #eaf3ff) 0 9px / 100% 1px no-repeat;
                }
                input::-webkit-slider-thumb {
                    appearance: none;
                    width: 9px;
                    height: 13px;
                    background: #edf3fc;
                    border: 1px solid #5f76a0;
                    border-radius: 1px 1px 4px 4px;
                }
                .plus { margin-right: 4px; }
            </style>
            <div class="info">
                <button>Strona: 1 z 1</button>
                <button>Wyrazy: 12</button>
                <button><app-icon name="proof"></app-icon>Polski (Polska)</button>
            </div>
            <div class="tools">
                <div class="views">${views}</div>
                <button class="zoom">100%</button>
                <button aria-label="Pomniejsz"><app-icon name="minus"></app-icon></button>
                <input type="range" aria-label="Powiększenie" min="0" max="200" value="100">
                <button class="plus" aria-label="Powiększ"><app-icon name="plus"></app-icon></button>
            </div>
        `;
    }
}

customElements.define('app-icon', AppIcon);
customElements.define('word-app', WordApp);
customElements.define('title-bar', TitleBar);
customElements.define('ribbon-tabs', RibbonTabs);
customElements.define('ribbon-tab', RibbonTab);
customElements.define('ribbon-panel', RibbonPanel);
customElements.define('ribbon-group', RibbonGroup);
customElements.define('big-button', BigButton);
customElements.define('button-stack', ButtonStack);
customElements.define('small-button', SmallButton);
customElements.define('group-divider', GroupDivider);
customElements.define('record-nav', RecordNav);
customElements.define('drop-menu', DropMenu);
customElements.define('menu-item', MenuItem);
customElements.define('menu-line', MenuLine);
customElements.define('ruler-bar', RulerBar);
customElements.define('word-workspace', WordWorkspace);
customElements.define('doc-page', DocPage);
customElements.define('scroll-bar', ScrollBar);
customElements.define('status-bar', StatusBar);
</script>
</body>
</html>
